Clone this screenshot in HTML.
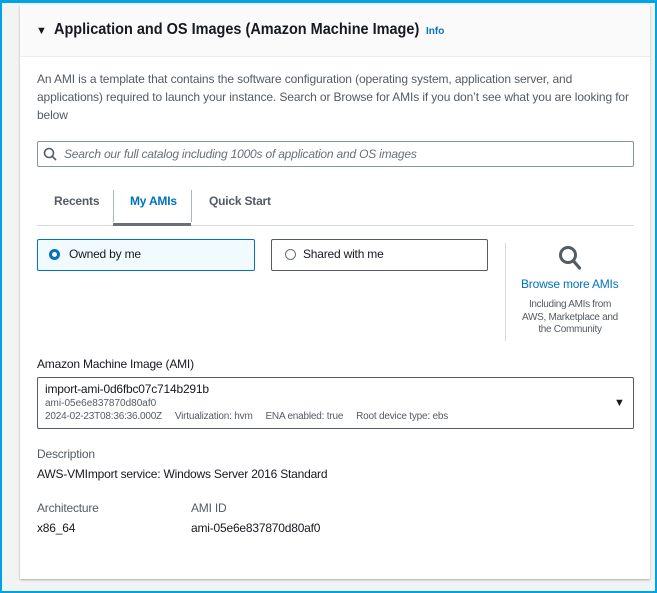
<!DOCTYPE html>
<html><head><style>
*{box-sizing:border-box;margin:0;padding:0}
body{width:657px;height:593px;overflow:hidden;background:#f2f3f3;font-family:"Liberation Sans",sans-serif;color:#16191f;position:relative}
.frame{position:absolute;left:0;top:0;width:657px;height:593px;border:2px solid #00a4e4;border-top-width:3px}
.card{position:absolute;left:20px;top:5px;width:630px;height:574px;background:#fff;box-shadow:0 1px 2px rgba(0,0,0,.3)}
.hdr{position:absolute;left:0;top:0;width:630px;height:52px;background:#fafafa;border-bottom:1px solid #eaeded}
.a{position:absolute;white-space:nowrap}
.s12{font-size:12px;letter-spacing:-0.2px}
.g{color:#545b64}
.box{position:absolute;border:1px solid #879596;border-radius:2px}
</style></head><body>
<div class="frame"></div>
<div class="card"><div class="hdr"></div></div>
<div class="a" style="left:36px;top:25px;font-size:11px">▼</div>
<div class="a" style="left:54px;top:21px;font-size:16px;font-weight:bold;transform:scaleX(0.905);transform-origin:0 0">Application and OS Images (Amazon Machine Image)</div>
<div class="a" style="left:426px;top:26px;font-size:10px;font-weight:bold;color:#0073bb">Info</div>
<div class="a g" style="left:37px;top:70px;line-height:18px;white-space:normal;width:598px;font-size:12px;letter-spacing:-0.12px">An AMI is a template that contains the software configuration (operating system, application server, and applications) required to launch your instance. Search or Browse for AMIs if you don’t see what you are looking for below</div>
<div class="box" style="left:37px;top:141px;width:597px;height:26px"></div>
<svg class="a" style="left:43px;top:147px" width="14" height="14" viewBox="0 0 14 14"><circle cx="6" cy="6" r="4.5" fill="none" stroke="#545b64" stroke-width="1.6"/><path d="M9.3 9.3L13 13" stroke="#545b64" stroke-width="1.6"/></svg>
<div class="a s12" style="left:64px;top:147px;font-style:italic;color:#687078">Search our full catalog including 1000s of application and OS images</div>
<div class="a s12" style="left:54px;top:194px;font-weight:bold;color:#545b64">Recents</div>
<div class="a" style="left:113px;top:190px;width:1px;height:32px;background:#aab7b8"></div>
<div class="a s12" style="left:130px;top:194px;font-weight:bold;color:#0073bb">My AMIs</div>
<div class="a" style="left:191px;top:190px;width:1px;height:32px;background:#aab7b8"></div>
<div class="a s12" style="left:209px;top:194px;font-weight:bold;color:#545b64">Quick Start</div>
<div class="a" style="left:37px;top:225px;width:597px;height:1px;background:#d5dbdb"></div>
<div class="a" style="left:113px;top:223px;width:78px;height:3px;background:#687078"></div>
<div class="box" style="left:37px;top:239px;width:218px;height:32px;border-color:#0073bb;background:#f1faff"></div>
<div class="a" style="left:49px;top:249px;width:11px;height:11px;border-radius:50%;border:3.5px solid #0073bb;background:#fff"></div>
<div class="a s12" style="left:69px;top:247px">Owned by me</div>
<div class="box" style="left:271px;top:239px;width:217px;height:32px;border-color:#545b64"></div>
<div class="a" style="left:285px;top:249px;width:11px;height:11px;border-radius:50%;border:1px solid #687078"></div>
<div class="a s12" style="left:303px;top:247px">Shared with me</div>
<div class="a" style="left:505px;top:243px;width:1px;height:98px;background:#d5dbdb"></div>
<svg class="a" style="left:558px;top:245px" width="24" height="26" viewBox="0 0 24 26"><circle cx="10" cy="10" r="7.5" fill="none" stroke="#545b64" stroke-width="3"/><path d="M15.5 16L21.5 23" stroke="#545b64" stroke-width="3.2" stroke-linecap="round"/></svg>
<div class="a s12" style="left:521px;top:277px;color:#0073bb">Browse more AMIs</div>
<div class="a g" style="left:518px;top:299px;width:104px;text-align:center;white-space:normal;font-size:10px;line-height:12.5px;letter-spacing:-0.3px">Including AMIs from AWS, Marketplace and the Community</div>
<div class="a s12" style="left:37px;top:357px">Amazon Machine Image (AMI)</div>
<div class="box" style="left:37px;top:377px;width:597px;height:52px;border-color:#545b64"></div>
<div class="a s12" style="left:45px;top:382px">import-ami-0d6fbc07c714b291b</div>
<div class="a g" style="left:45px;top:398px;font-size:10px">ami-05e6e837870d80af0</div>
<div class="a g" style="left:45px;top:411px;font-size:10px;letter-spacing:-0.2px">2024-02-23T08:36:36.000Z &nbsp;&nbsp;&nbsp; Virtualization: hvm &nbsp;&nbsp;&nbsp; ENA enabled: true &nbsp;&nbsp;&nbsp; Root device type: ebs</div>
<div class="a" style="left:614px;top:397px;font-size:11px">▼</div>
<div class="a s12 g" style="left:37px;top:447px">Description</div>
<div class="a s12" style="left:37px;top:467px">AWS-VMImport service: Windows Server 2016 Standard</div>
<div class="a s12 g" style="left:37px;top:501px">Architecture</div>
<div class="a s12" style="left:37px;top:521px">x86_64</div>
<div class="a s12 g" style="left:191px;top:501px">AMI ID</div>
<div class="a s12" style="left:191px;top:521px">ami-05e6e837870d80af0</div>
</body></html>
